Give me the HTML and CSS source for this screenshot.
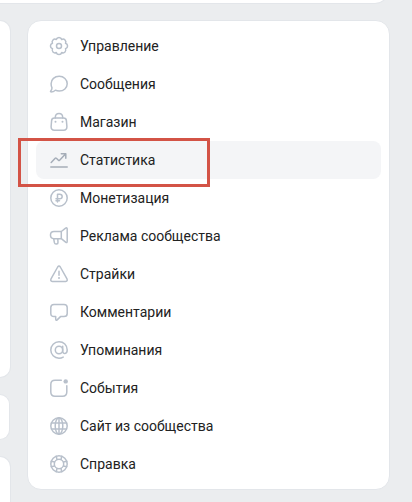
FILE: index.html
```html
<!DOCTYPE html>
<html lang="ru">
<head>
  <meta charset="UTF-8">
  <meta name="viewport" content="width=device-width, initial-scale=1">
  <title>Управление сообществом</title>
  <link rel="stylesheet" href="styles.css">
</head>
<body>
  <div class="cover"></div>

  <div class="layout">
    <div class="feed">
      <div class="block block-posts"></div>
      <div class="block block-search"></div>
      <div class="block block-last"></div>
    </div>

    <nav class="menu">
      <a class="menu-item" href="#manage">
        <svg class="icon" viewBox="0 0 20 20"><path d="M7.300 3.500A2.800 2.800 0 0 1 12.700 3.500A2.800 2.800 0 0 1 16.500 7.300A2.800 2.800 0 0 1 16.500 12.700A2.800 2.800 0 0 1 12.700 16.500A2.800 2.800 0 0 1 7.300 16.500A2.800 2.800 0 0 1 3.500 12.700A2.800 2.800 0 0 1 3.500 7.300A2.800 2.800 0 0 1 7.300 3.500Z"/><circle cx="10" cy="10" r="2.5"/></svg>
        <span>Управление</span>
      </a>
      <a class="menu-item" href="#messages">
        <svg class="icon" viewBox="0 0 20 20"><path d="M10.200 2.300C14.800 2.300 18.200 5.500 18.200 9.700S14.800 17.100 10.200 17.100C8.800 17.100 7.500 16.800 6.400 16.200C5 17.400 3.500 17.900 2 17.900C1.500 17.900 1.300 17.400 1.700 17C2.700 16 3 14.900 3 13.800C2.400 12.600 2.100 11.200 2.100 9.700C2.100 5.500 5.600 2.300 10.200 2.300Z"/></svg>
        <span>Сообщения</span>
      </a>
      <a class="menu-item" href="#market">
        <svg class="icon" viewBox="0 0 20 20"><path d="M5.500 6H14.500Q17.200 6 17.400 8.600L17.900 14.500Q18 18.200 14.600 18.200H5.400Q2 18.200 2.100 14.500L2.600 8.600Q2.800 6 5.500 6Z"/><path d="M6.300 6V5.500C6.300 3 7.900 1.500 10 1.500S13.700 3 13.700 5.500V6"/><circle class="dot" cx="6.500" cy="9.700" r="1"/><circle class="dot" cx="13.500" cy="9.700" r="1"/></svg>
        <span>Магазин</span>
      </a>
      <a class="menu-item active" href="#stats">
        <svg class="icon" viewBox="0 0 20 20"><path d="M2.200 12.500L6.200 8.300Q6.800 7.700 7.400 8.300L9.400 10.200Q10 10.800 10.600 10.200L16.500 4M12.300 3.700H16.800V8.200M1.800 17H18.200"/></svg>
        <span>Статистика</span>
      </a>
      <a class="menu-item" href="#money">
        <svg class="icon" viewBox="0 0 20 20"><circle cx="10" cy="10" r="8.200"/><path d="M8.500 14V6.200H10.700C14 6.200 14 10.800 10.700 10.800H7M7 12.800H10.500"/></svg>
        <span>Монетизация</span>
      </a>
      <a class="menu-item" href="#ads">
        <svg class="icon" viewBox="0 0 20 20"><path d="M12.300 5.500H5C.3 5.500 .3 12.700 5 12.700H12.300L16.600 16.200Q18.200 17.300 18.200 15.300V3Q18.200 1 16.600 2.200L12.300 5.500V12.700M4.700 12.900L5.400 16.700C5.900 18.800 9.200 18.500 9 16.200L8.800 12.900"/></svg>
        <span>Реклама сообщества</span>
      </a>
      <a class="menu-item" href="#strikes">
        <svg class="icon" viewBox="0 0 20 20"><path d="M8.700 3Q10 1.100 11.300 3L18 14.900Q18.900 17.200 16.700 17.500H3.300Q1.100 17.200 2 14.900ZM10 7.300V11.200"/><circle class="dot" cx="10" cy="14" r="1"/></svg>
        <span>Страйки</span>
      </a>
      <a class="menu-item" href="#comments">
        <svg class="icon" viewBox="0 0 20 20"><path d="M5 2.500H15Q18.200 2.500 18.200 5.600V11.500Q18.200 14.600 15 14.600H11.500L8.200 17.900Q6.900 18.900 6.700 17.200V14.600H5Q1.800 14.600 1.800 11.500V5.600Q1.800 2.500 5 2.500Z"/></svg>
        <span>Комментарии</span>
      </a>
      <a class="menu-item" href="#mentions">
        <svg class="icon" viewBox="0 0 20 20"><circle cx="10" cy="10" r="3.700"/><path d="M13.700 6.300V11C13.700 14.500 18.200 14.300 18.200 10C18.200 5 14.600 1.800 10 1.800S1.800 5.400 1.800 10S5.400 18.200 10 18.200C11.700 18.200 13 17.800 14.200 17.100"/></svg>
        <span>Упоминания</span>
      </a>
      <a class="menu-item" href="#events">
        <svg class="icon" viewBox="0 0 20 20"><path d="M12.300 2.200H6Q1.800 2.200 1.800 6.400V14Q1.800 18.200 6 18.200H13.600Q17.800 18.200 17.800 14V7.700"/><circle class="dot" cx="16.700" cy="3.400" r="2.200"/></svg>
        <span>События</span>
      </a>
      <a class="menu-item" href="#site">
        <svg class="icon" viewBox="0 0 20 20"><circle cx="10" cy="10" r="8.200"/><ellipse cx="10" cy="10" rx="3.800" ry="8.200"/><path d="M10 1.800V18.200M2.500 7H17.500M2.500 13H17.500"/></svg>
        <span>Сайт из сообщества</span>
      </a>
      <a class="menu-item" href="#help">
        <svg class="icon" viewBox="0 0 20 20"><circle cx="10" cy="10" r="8.200"/><circle cx="10" cy="10" r="4.700"/><path d="M7.300 2.300L8 5.500M12.700 2.300L12 5.500M7.300 17.700L8 14.500M12.700 17.700L12 14.500M2.300 7.300L5.500 8M2.300 12.700L5.500 12M17.700 7.300L14.500 8M17.700 12.700L14.500 12"/></svg>
        <span>Справка</span>
      </a>
    </nav>
  </div>
</body>
</html>
```
FILE: styles.css
```css
* {
  box-sizing: border-box;
}

body {
  margin: 0;
  min-height: 100vh;
  display: flex;
  flex-direction: column;
  gap: 16px;
  overflow-x: hidden;
  background-color: #ebedef;
  color: #222;
  font-family: Roboto, "Noto Sans", Arial, sans-serif;
  font-size: 14px;
  line-height: 18px;
}

.cover {
  height: 24px;
  margin: -20px 23px 0 0;
  background-color: #fff;
  border: 1px solid #e3e6ea;
  border-left: none;
  border-radius: 0 0 14px 0;
}

.layout {
  flex: 1;
  display: flex;
  gap: 16px;
  padding-right: 22px;
}

.feed {
  width: 11px;
  display: flex;
  flex-direction: column;
  gap: 16px;
}

.block {
  background-color: #fff;
  border: 1px solid #e3e6ea;
  border-left: none;
  border-radius: 0 12px 12px 0;
}

.block-posts {
  height: 358px;
}

.block-search {
  height: 46px;
  margin-right: 1px;
}

.block-last {
  flex: 1;
  border-bottom: none;
  border-radius: 0 12px 0 0;
}

.menu {
  flex: 1;
  align-self: flex-start;
  padding: 6px 8px;
  background-color: #fff;
  border: 1px solid #e3e6ea;
  border-radius: 14px;
}

.menu-item {
  display: flex;
  align-items: center;
  gap: 11px;
  height: 38px;
  padding: 0 13px;
  border-radius: 8px;
  color: inherit;
  text-decoration: none;
}

.menu-item:hover,
.menu-item.active {
  background-color: #f4f5f7;
}

.menu-item.active {
  position: relative;
}

/* red frame around the current section */
.menu-item.active::after {
  content: '';
  position: absolute;
  top: -3px;
  left: -18px;
  width: 192px;
  height: 49px;
  box-sizing: border-box;
  border: 3px solid #d35346;
}

.icon {
  width: 20px;
  height: 20px;
  fill: none;
  stroke: #b8c0cb;
  stroke-width: 1.5;
  stroke-linecap: round;
  stroke-linejoin: round;
}

.icon .dot {
  fill: #b8c0cb;
  stroke: none;
}

.active .icon {
  stroke: #a5adb8;
}
```
